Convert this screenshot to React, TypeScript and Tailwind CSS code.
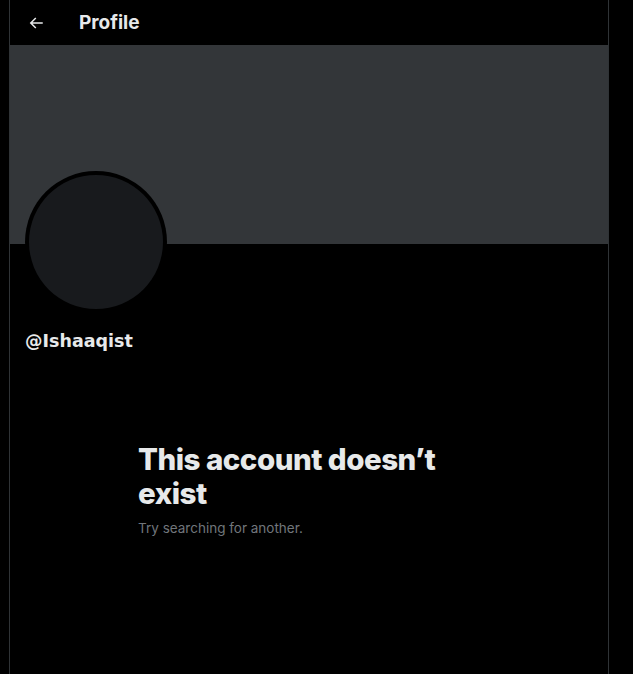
import React from "react";

export default function App() {
  return (
    <div className="w-[633px] h-[674px] bg-black overflow-hidden" style={{ fontFamily: "Inter, 'Noto Sans', sans-serif" }}>
      <div className="ml-[9px] w-[600px] h-[674px] border-x border-[#2f3336] flex flex-col">
        <div className="h-[45px] flex items-center pl-[16px]">
          <div className="w-[20px] h-[20px] flex items-center justify-center">
            <svg viewBox="0 0 24 24" width="18" height="18" fill="#e7e9ea">
              <path d="M7.414 13l5.043 5.04-1.414 1.42L3.586 12l7.457-7.46 1.414 1.42L7.414 11H21v2H7.414z" />
            </svg>
          </div>
          <div className="ml-[33px] text-[19px] font-bold text-[#e7e9ea] leading-none">Profile</div>
        </div>
        <div className="h-[199px] bg-[#333639] shrink-0" />
        <div className="px-[15px] relative">
          <div className="-mt-[73px] w-[142px] h-[142px] rounded-full bg-black p-[4px]">
            <div className="w-full h-full rounded-full bg-[#181a1d]" />
          </div>
          <div className="mt-[18px] text-[17.5px] font-bold text-[#e7e9ea] leading-[20px]" style={{ fontFamily: "'DejaVu Sans', sans-serif" }}>
            @Ishaaqist
          </div>
        </div>
        <div className="mt-[91px] ml-[128px] w-[340px]">
          <div className="text-[29.5px] font-extrabold text-[#e7e9ea] leading-[34px] tracking-[-0.5px]">
            This account doesn’t exist
          </div>
          <div className="mt-[8px] text-[13.5px] text-[#71767b] leading-[20px]">Try searching for another.</div>
        </div>
      </div>
    </div>
  );
}
